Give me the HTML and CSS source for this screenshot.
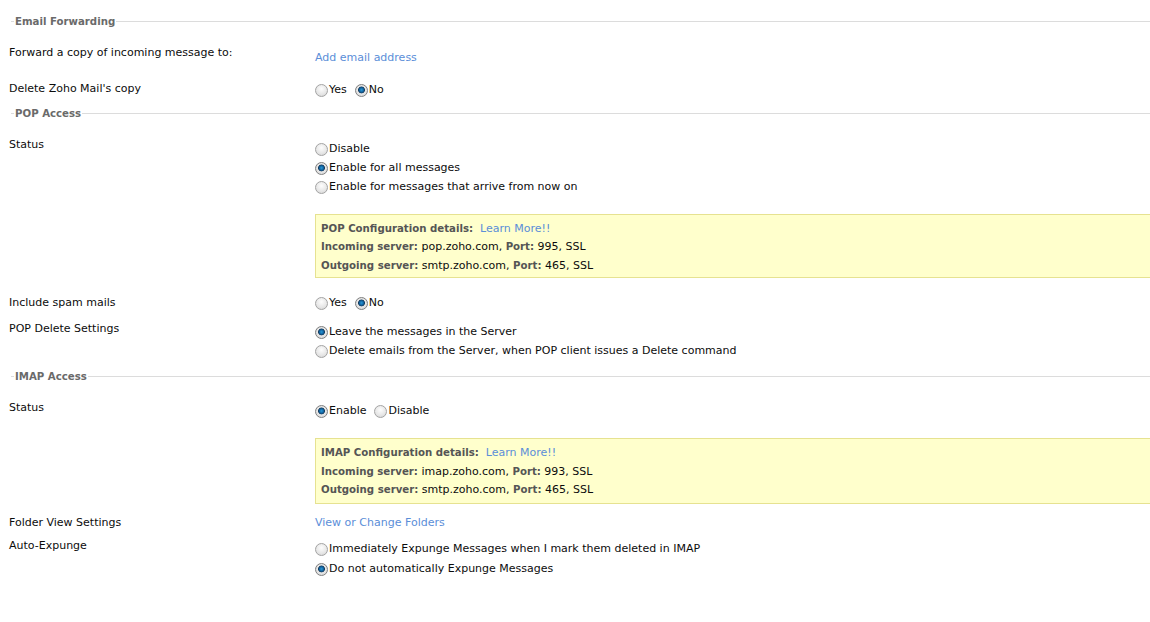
FILE: index.html
```html
<!DOCTYPE html>
<html>
    <head>
        <meta charset="utf-8">
        <title>POP / IMAP Settings</title>
        <link rel="stylesheet" href="styles.css">
    </head>
    <body>
        <div class="contain">
            <!-- 邮件转发 -->
            <div class="sec-head"><span>Email Forwarding</span></div>
            <div class="row top">
                <div class="lbl">Forward a copy of incoming message to:</div>
                <div class="val off5"><a href="#">Add email address</a></div>
            </div>
            <div class="row gap12">
                <div class="lbl">Delete Zoho Mail's copy</div>
                <div class="val off1 opts">
                    <label class="opt"><input type="radio" name="fwdDel">Yes</label>
                    <label class="opt"><input type="radio" name="fwdDel" checked>No</label>
                </div>
            </div>

            <!-- POP -->
            <div class="sec-head"><span>POP Access</span></div>
            <div class="row first">
                <div class="lbl">Status</div>
                <div class="val off4">
                    <label class="line"><input type="radio" name="popStatus">Disable</label>
                    <label class="line"><input type="radio" name="popStatus" checked>Enable for all messages</label>
                    <label class="line"><input type="radio" name="popStatus">Enable for messages that arrive from now on</label>
                    <div class="info">
                        <p><b>POP Configuration details:</b>&nbsp; <a href="#">Learn More!!</a></p>
                        <p><b>Incoming server:</b> pop.zoho.com, <b>Port:</b> 995, SSL</p>
                        <p><b>Outgoing server:</b> smtp.zoho.com, <b>Port:</b> 465, SSL</p>
                    </div>
                </div>
            </div>
            <div class="row first">
                <div class="lbl">Include spam mails</div>
                <div class="val opts">
                    <label class="opt"><input type="radio" name="popSpam">Yes</label>
                    <label class="opt"><input type="radio" name="popSpam" checked>No</label>
                </div>
            </div>
            <div class="row gap7">
                <div class="lbl">POP Delete Settings</div>
                <div class="val off3">
                    <label class="line"><input type="radio" name="popDel" checked>Leave the messages in the Server</label>
                    <label class="line"><input type="radio" name="popDel">Delete emails from the Server, when POP client issues a Delete command</label>
                </div>
            </div>

            <!-- IMAP -->
            <div class="sec-head imap"><span>IMAP Access</span></div>
            <div class="row first">
                <div class="lbl">Status</div>
                <div class="val off3">
                    <div class="opts">
                        <label class="opt"><input type="radio" name="imapStatus" checked>Enable</label>
                        <label class="opt"><input type="radio" name="imapStatus">Disable</label>
                    </div>
                    <div class="info tall">
                        <p><b>IMAP Configuration details:</b>&nbsp; <a href="#">Learn More!!</a></p>
                        <p><b>Incoming server:</b> imap.zoho.com, <b>Port:</b> 993, SSL</p>
                        <p><b>Outgoing server:</b> smtp.zoho.com, <b>Port:</b> 465, SSL</p>
                    </div>
                </div>
            </div>
            <div class="row gap9">
                <div class="lbl">Folder View Settings</div>
                <div class="val"><a href="#">View or Change Folders</a></div>
            </div>
            <div class="row gap4">
                <div class="lbl">Auto-Expunge</div>
                <div class="val off3">
                    <label class="line"><input type="radio" name="expunge">Immediately Expunge Messages when I mark them deleted in IMAP</label>
                    <label class="line next"><input type="radio" name="expunge" checked>Do not automatically Expunge Messages</label>
                </div>
            </div>
        </div>
    </body>
</html>
```

FILE: styles.css
```css
*{
    margin:0;
    padding:0;
    border:0;
    box-sizing:border-box;
}
body{
    font-family:"DejaVu Sans", Verdana, sans-serif;
    font-size:11px;
    color:#0c0c0c;
    background-color:#fff;
}
.contain{
    padding:14px 0 0 9px;
}
a{
    color:#5b8ed8;
    text-decoration:none;
}
b{
    font-size:10.2px;
}
.sec-head{
    display:flex;
    align-items:center;
    height:14px;
    line-height:14px;
    margin-left:2px;
    margin-top:7.5px;
    font-size:10.2px;
    font-weight:bold;
    color:#6a6a6a;
}
.contain > .sec-head:first-child{
    margin-top:0;
}
.sec-head.imap{
    margin-top:9.5px;
}
.sec-head span{
    position:relative;
    top:1px;
}
.sec-head:before{
    content:"";
    width:3px;
    height:1px;
    margin-right:1px;
    background-color:#dcdcdc;
}
.sec-head:after{
    content:"";
    flex:1;
    height:1px;
    margin-left:1px;
    background-color:#dcdcdc;
}
.row{
    display:flex;
    line-height:19px;
}
.row.top{ margin-top:14.5px; }
.row.first{ margin-top:14.5px; }
.row.gap12{ margin-top:12px; }
.row.gap7{ margin-top:7px; }
.row.gap9{ margin-top:9.5px; }
.row.gap4{ margin-top:4px; }
.lbl{
    width:306px;
    flex:none;
}
.val{
    flex:1;
}
.val.off1{ padding-top:1px; }
.val.off3{ padding-top:3px; }
.val.off4{ padding-top:4px; }
.val.off5{ padding-top:5px; }
.opts{
    display:flex;
    align-items:center;
    height:19px;
}
.val.opts{
    height:auto;
    align-items:flex-start;
}
.opt{
    display:flex;
    align-items:center;
    height:19px;
    margin-right:8px;
}
.line{
    display:flex;
    align-items:center;
    height:19px;
}
.line.next{
    margin-top:1px;
}
input[type=radio]{
    -webkit-appearance:none;
    appearance:none;
    flex:none;
    width:13px;
    height:13px;
    margin-right:1px;
    margin-top:2px;
    border-radius:50%;
    border:1px solid #a3a3a3;
    background:radial-gradient(circle at 50% 35%, #fdfdfd 0%, #e6e6e6 60%, #d0d0d0 100%);
}
input[type=radio]:checked{
    border-color:#808080;
    background:radial-gradient(circle at 50% 45%, #2a9ad8 0%, #0f5d99 28%, #1b3d5c 38%, #e8e8e8 46%, #d2d2d2 100%);
}
.info{
    margin-top:18.5px;
    margin-right:-20px;
    padding:4.5px 5px 2px;
    background-color:#ffffcc;
    border:1px solid #e6e291;
    line-height:18.5px;
}
.info.tall{
    padding-top:5px;
    padding-bottom:3px;
}
.info b{
    color:#555;
}
```
